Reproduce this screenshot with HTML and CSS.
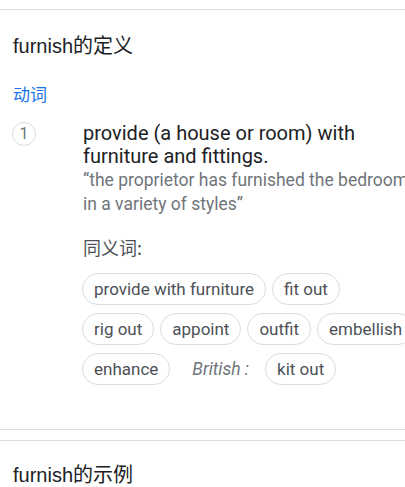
FILE: index.html
```html
<!DOCTYPE html>
<html>
<head>
<meta charset="utf-8">
<link rel="stylesheet" href="styles.css">
</head>
<body>
<div class="page">
  <div class="topline"></div>
  <h2 class="heading">furnish的定义</h2>
  <div class="pos">动词</div>
  <div class="sense">
    <div class="num">1</div>
    <div class="body">
      <div class="def">provide (a house or room) with furniture and fittings.</div>
      <div class="example">“the proprietor has furnished the bedrooms in a variety of styles”</div>
      <div class="syn-label">同义词:</div>
      <div class="chips">
        <span class="chip">provide with furniture</span>
        <span class="chip">fit out</span>
        <span class="chip">rig out</span>
        <span class="chip">appoint</span>
        <span class="chip">outfit</span>
        <span class="chip">embellish</span>
        <span class="chip">enhance</span>
        <span class="region">British :</span>
        <span class="chip">kit out</span>
      </div>
    </div>
  </div>
  <div class="divider"></div>
  <h2 class="heading heading2">furnish的示例</h2>
</div>
</body>
</html>
```
FILE: styles.css
```css
html, body {
  margin: 0;
  padding: 0;
  background: #fff;
  overflow: hidden;
}
.page {
  width: 418px;
  font-family: Roboto, "Noto Sans CJK SC", sans-serif;
  color: #202124;
}
.topline {
  height: 9px;
  border-bottom: 1px solid #dadce0;
}
.heading {
  margin: 0;
  padding: 23px 13px 0;
  font-family: "Liberation Sans", "Noto Sans CJK SC", sans-serif;
  font-weight: normal;
  font-size: 20px;
  line-height: 26px;
  color: #202124;
}
.pos {
  margin: 24px 0 0 13px;
  font-family: "Noto Sans CJK SC", sans-serif;
  font-size: 17px;
  line-height: 22px;
  color: #1a73e8;
}
.sense {
  display: flex;
  margin-top: 17px;
  padding-left: 12px;
}
.num {
  flex: none;
  width: 22px;
  height: 22px;
  border: 1px solid #dadce0;
  border-radius: 50%;
  font-size: 16px;
  line-height: 22px;
  text-align: center;
  color: #70757a;
  margin-top: 0;
}
.body {
  margin-left: 46px;
  flex: 1;
  min-width: 0;
}
.def {
  padding-left: 1px;
  font-size: 20px;
  line-height: 23px;
  color: #202124;
}
.example {
  padding-left: 1px;
  margin-top: 0;
  font-size: 17.5px;
  line-height: 24px;
  color: #70757a;
}
.syn-label {
  padding-left: 1px;
  margin-top: 19px;
  font-family: "Noto Sans CJK SC", sans-serif;
  font-size: 18px;
  line-height: 24px;
  color: #4d5156;
}
.chips {
  display: flex;
  flex-wrap: wrap;
  align-items: center;
  gap: 8px 6px;
  margin-top: 14px;
}
.chip {
  box-sizing: border-box;
  height: 32px;
  padding: 0 11px;
  border: 1px solid #dadce0;
  border-radius: 16px;
  font-size: 17px;
  line-height: 30px;
  color: #4d5156;
  white-space: nowrap;
}
.region {
  font-style: italic;
  font-size: 17.5px;
  color: #70757a;
  margin: 0 10px 0 16px;
  white-space: nowrap;
}
.divider {
  margin-top: 44px;
  height: 10px;
  border-top: 1px solid #dadce0;
  border-bottom: 1px solid #dadce0;
}
.heading2 {
  padding-top: 21px;
}
```
